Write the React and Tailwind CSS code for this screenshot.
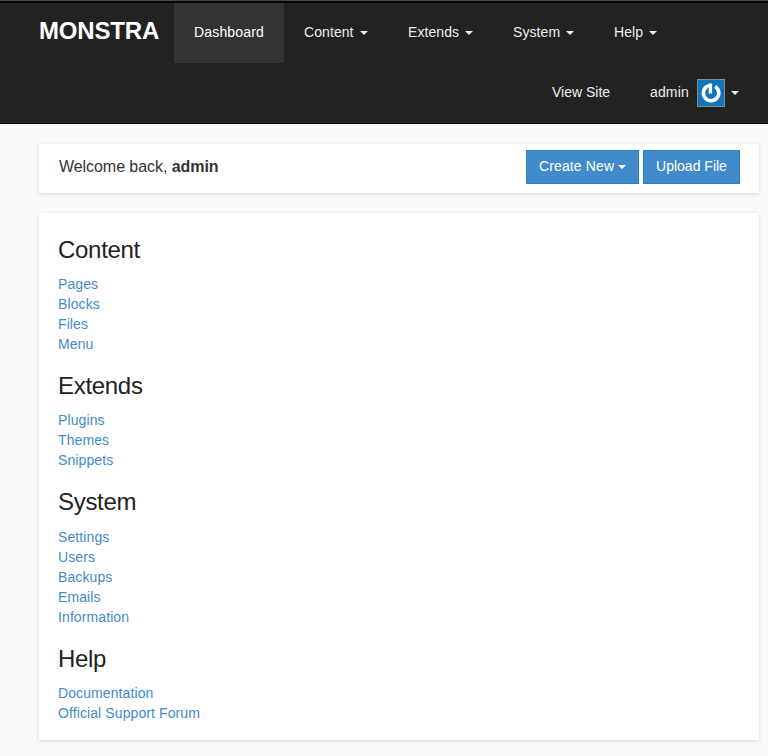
const sections = [
  { title: 'Content', links: ['Pages', 'Blocks', 'Files', 'Menu'] },
  { title: 'Extends', links: ['Plugins', 'Themes', 'Snippets'] },
  { title: 'System', links: ['Settings', 'Users', 'Backups', 'Emails', 'Information'] },
  { title: 'Help', links: ['Documentation', 'Official Support Forum'] },
];

const menus = [
  { label: 'Content', width: 'w-[104px]' },
  { label: 'Extends', width: 'w-[105px]' },
  { label: 'System', width: 'w-[101px]' },
  { label: 'Help', width: 'w-[83px]' },
];

function Caret() {
  return <span className="block h-0 w-0 shrink-0 border-x-4 border-t-4 border-x-transparent border-t-current" />;
}

function PowerIcon() {
  return (
    <svg viewBox="0 0 26 26" className="block size-[26px]" fill="none" stroke="#ffffff">
      <path d="M8.8 6.6A7.7 7.7 0 1 0 17.2 6.5" strokeWidth="3.6" />
      <path d="M8.4 6.9Q10.4 5.1 12.6 5" strokeWidth="3.2" />
      <path d="M12.4 3.5V13.6" strokeWidth="3.4" />
    </svg>
  );
}

export default function App() {
  return (
    <div className="min-h-[756px] w-[768px] bg-[#fafafa] font-['Liberation_Sans',Arial,sans-serif] text-sm leading-5 text-[#333333]">
      <header className="h-[124px] border-b border-black bg-[#222222] text-[#eeeeee]">
        <div className="h-[3px] border-t border-[#3f4550] bg-[#080808]" />
        <nav className="flex h-[60px] whitespace-nowrap">
          <a className="w-[174px] pt-[18px] pl-[39px] text-2xl leading-5 font-bold tracking-[-0.18px] text-white">MONSTRA</a>
          <a className="h-[60px] w-[110px] bg-[#333333] px-5 pt-[19px] tracking-[0.17px] text-white">Dashboard</a>
          {menus.map((m) => (
            <a key={m.label} className={`${m.width} flex h-[60px] items-center justify-between px-5 pb-0.5`}>
              <span className="tracking-[0.08px]">{m.label}</span>
              <span className="pt-0.5"><Caret /></span>
            </a>
          ))}
        </nav>
        <nav className="flex h-[60px] justify-end pr-[9px] whitespace-nowrap">
          <a className="w-[98px] px-5 pt-[19px]">View Site</a>
          <a className="flex w-[129px] items-center px-5">
            <span className="w-[47px] pb-0.5 tracking-[0.15px]">admin</span>
            <span className="mr-1.5 size-7 border border-[#888888] bg-[#0d75bb]"><PowerIcon /></span>
            <Caret />
          </a>
        </nav>
      </header>
      <main className="flex flex-col gap-5 pt-5 pr-[9px] pl-[39px]">
        <section className="flex h-[49px] items-start justify-between bg-white px-5 pt-1.5 pr-[19px] shadow-[0_1px_4px_rgba(0,0,0,0.14)]">
          <p className="pt-[7px] text-base leading-5 tracking-[-0.06px]">Welcome back, <b>admin</b></p>
          <div className="flex gap-1 text-white">
            <button className="flex h-[34px] w-[113px] items-center justify-between border border-[#357ebd] bg-[#428bca] px-3 pb-0.5">
              <span className="tracking-[0.12px]">Create New</span>
              <span className="pt-0.5"><Caret /></span>
            </button>
            <button className="h-[34px] w-[97px] border border-[#357ebd] bg-[#428bca] pb-0.5 whitespace-nowrap">Upload File</button>
          </div>
        </section>
        <section className="flex h-[527px] flex-col gap-5 bg-white pt-[24.6px] pl-[19px] shadow-[0_1px_4px_rgba(0,0,0,0.14)]">
          {sections.map((s) => (
            <div key={s.title}>
              <h3 className="mb-3 text-2xl leading-[24.4px] tracking-[-0.3px] text-[#222222]">{s.title}</h3>
              <ul className="tracking-[0.1px] text-[#428bca]">
                {s.links.map((l) => <li key={l}><a>{l}</a></li>)}
              </ul>
            </div>
          ))}
        </section>
      </main>
    </div>
  );
}
